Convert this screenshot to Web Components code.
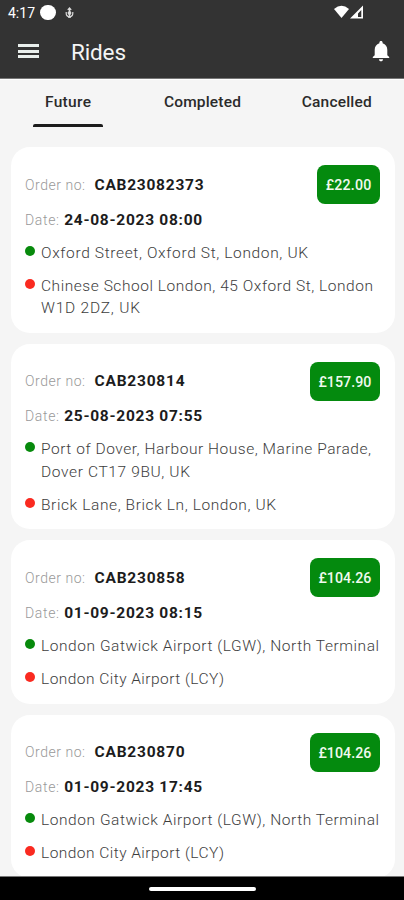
<!DOCTYPE html>
<html lang="en">
<head>
<meta charset="utf-8">
<title>Rides</title>
<style>
html, body { margin: 0; height: 100%; overflow: hidden; }
body { font-family: Roboto, "Noto Sans", sans-serif; background: #f5f5f5; }
</style>
</head>
<body>
<rides-app></rides-app>
<script>
class Base extends HTMLElement {
  constructor() { super(); this.attachShadow({ mode: 'open' }); }
  connectedCallback() { this.shadowRoot.innerHTML = this.render(); }
  render() { return ''; }
}

/* One line of text whose tracking is adjusted to fill a given width. */
customElements.define('tracked-text', class extends Base {
  connectedCallback() {
    super.connectedCallback();
    const s = this.shadowRoot.querySelector('span');
    const n = this.textContent.length;
    const w = s.getBoundingClientRect().width;
    s.style.letterSpacing = ((Number(this.getAttribute('w')) - w) / (n - 1)).toFixed(3) + 'px';
  }
  render() {
    return `<style>:host{display:block;white-space:nowrap} span{display:inline-block}</style><span><slot></slot></span>`;
  }
});

customElements.define('status-bar', class extends Base {
  render() {
    return `<style>
      :host{display:flex;align-items:center;height:25px;padding:0 39px 0 8px;color:#fff;font-size:14px;line-height:25px}
      .l{display:flex;align-items:center;flex:1}
      .l tracked-text{padding-top:2px}
      .dot{width:15.5px;height:15.5px;border-radius:50%;background:#fff;margin-left:5px}
      svg{display:block}
    </style>
    <div class="l"><tracked-text w="27">4:17</tracked-text><div class="dot"></div>
      <svg style="margin-left:8.5px" width="11" height="14" viewBox="0 0 11 14" fill="none" stroke="#ddd" stroke-width="1.2">
        <path d="M5.5 2.5v9M2.2 6v1.2a3.3 3.3 0 0 0 6.6 0V6M3.8 4l1.7-2 1.7 2"/><circle cx="5.5" cy="7" r="1.3" fill="#ddd"/><path d="M4 11.2h3"/>
      </svg></div>
    <svg width="31" height="15" viewBox="0 0 31 15" fill="#fff">
      <path d="M0 4Q7.5-2.4 15 4L7.5 13Z"/>
      <path fill-rule="evenodd" d="M29 .5V13.5H16ZM27.3 5L24 8.5V12H27.3Z"/>
    </svg>`;
  }
});

customElements.define('app-bar', class extends Base {
  render() {
    return `<style>
      :host{display:flex;align-items:center;height:53px;padding:0 14px 0 18px;color:#f5f5f5}
      .menu{width:21px;display:grid;gap:2.5px;margin:-1px 32px 0 0}
      .menu i{height:3px;background:#e9efec}
      .t{font-size:22.5px;flex:1;line-height:30px}
      svg{display:block}
    </style>
    <div class="menu"><i></i><i></i><i></i></div>
    <div class="t"><tracked-text w="55">${this.textContent}</tracked-text></div>
    <svg width="18" height="21" viewBox="0 0 18 21" fill="#fff">
      <path d="M9 0C8 0 7.4.7 7.4 1.6V2.2C4.4 3 2.7 5.6 2.7 8.8V14.2L.8 16.1V17.1H17.2V16.1L15.3 14.2V8.8C15.3 5.6 13.6 3 10.6 2.2V1.6C10.6.7 10 0 9 0ZM7 18.2C7 19.5 7.9 20.3 9 20.3S11 19.5 11 18.2Z"/>
    </svg>`;
  }
});

customElements.define('tab-item', class extends Base {
  render() {
    return `<style>
      :host{display:flex;flex-direction:column;align-items:center;justify-content:space-between;flex:1;box-sizing:border-box;padding-top:12px;font-size:15.5px;line-height:20px;font-weight:500;color:#2b2b2b}
      i{width:70px;height:3px;border-radius:2px 2px 0 0}
      :host([active]) i{background:#1c1c1c}
    </style><tracked-text w="${this.getAttribute('w')}">${this.textContent}</tracked-text><i></i>`;
  }
});

customElements.define('tab-row', class extends Base {
  render() { return `<style>:host{display:flex;height:47px;padding-left:1px;border-top:1px solid #fff;margin-bottom:20.2px}</style><slot></slot>`; }
});

customElements.define('price-badge', class extends Base {
  render() {
    return `<style>
      :host{display:flex;align-items:center;height:39px;box-sizing:border-box;padding:1px 8.5px 0;background:#048a0e;border-radius:8px;color:#f1faef;font-size:14.2px;font-weight:500}
    </style><tracked-text w="${this.getAttribute('w')}">${this.textContent}</tracked-text>`;
  }
});

customElements.define('route-stop', class extends Base {
  render() {
    return `<style>
      :host{display:flex;font-size:15.5px;line-height:22.4px;font-weight:300;color:#3d3d3d}
      i{width:10px;height:10px;border-radius:50%;background:#078a0c;margin:4px 6px 0 0;flex:none}
      :host([kind=drop]) i{background:#fa2a20}
    </style><i></i><div><slot></slot></div>`;
  }
});

customElements.define('ride-card', class extends Base {
  render() {
    const a = n => this.getAttribute(n);
    return `<style>
      :host{display:block;background:#fff;border-radius:19px;padding:18px 14.5px 13.2px 14px;flex:none}
      .top{display:flex;align-items:center;height:39px}
      .k{font-size:14px;font-weight:300;color:#999}
      .v{font-size:15.5px;font-weight:700;color:#1c1c1c}
      .top .v{margin-left:9px;flex:1}
      .date{display:flex;align-items:center;height:22px;margin:4.5px 0 11.2px}
      .date .v{margin-left:4.5px}
      .stops{display:grid;gap:10.5px}
    </style>
    <div class="top"><tracked-text class="k" w="60">Order no:</tracked-text><tracked-text class="v" w="${a('order-w')}">${a('order')}</tracked-text><price-badge w="${a('price-w')}">${a('price')}</price-badge></div>
    <div class="date"><tracked-text class="k" w="34">Date:</tracked-text><tracked-text class="v" w="138">${a('date')}</tracked-text></div>
    <div class="stops"><slot></slot></div>`;
  }
});

customElements.define('home-bar', class extends Base {
  render() {
    return `<style>:host{display:flex;justify-content:center;align-items:center;height:24px;background:#000;border-top:1px solid #777;box-sizing:border-box}
    i{width:107px;height:4px;border-radius:2px;background:#fff}</style><i></i>`;
  }
});

customElements.define('rides-app', class extends Base {
  render() {
    return `<style>
      :host{display:flex;flex-direction:column;width:404px;height:900px;overflow:hidden;background:#f5f5f5}
      header{background:#333;border-bottom:1px solid #777}
      .list{flex:1;min-height:0;overflow:hidden;display:flex;flex-direction:column;gap:11px;padding:0 9.5px 0 11px}
    </style>
    <header><status-bar></status-bar><app-bar>Rides</app-bar></header>
    <tab-row><tab-item active w="46">Future</tab-item><tab-item w="77">Completed</tab-item><tab-item w="70">Cancelled</tab-item></tab-row>
    <div class="list">
      <ride-card order="CAB23082373" order-w="109" price="£22.00" price-w="45.5" date="24-08-2023 08:00">
        <route-stop><tracked-text w="267">Oxford Street, Oxford St, London, UK</tracked-text></route-stop>
        <route-stop kind="drop"><tracked-text w="332">Chinese School London, 45 Oxford St, London</tracked-text><tracked-text w="99">W1D 2DZ, UK</tracked-text></route-stop>
      </ride-card>
      <ride-card order="CAB230814" order-w="90" price="£157.90" price-w="53" date="25-08-2023 07:55">
        <route-stop><tracked-text w="330">Port of Dover, Harbour House, Marine Parade,</tracked-text><tracked-text w="149">Dover CT17 9BU, UK</tracked-text></route-stop>
        <route-stop kind="drop"><tracked-text w="235">Brick Lane, Brick Ln, London, UK</tracked-text></route-stop>
      </ride-card>
      <ride-card order="CAB230858" order-w="90" price="£104.26" price-w="53" date="01-09-2023 08:15">
        <route-stop><tracked-text w="338">London Gatwick Airport (LGW), North Terminal</tracked-text></route-stop>
        <route-stop kind="drop"><tracked-text w="183">London City Airport (LCY)</tracked-text></route-stop>
      </ride-card>
      <ride-card order="CAB230870" order-w="90" price="£104.26" price-w="53" date="01-09-2023 17:45">
        <route-stop><tracked-text w="338">London Gatwick Airport (LGW), North Terminal</tracked-text></route-stop>
        <route-stop kind="drop"><tracked-text w="183">London City Airport (LCY)</tracked-text></route-stop>
      </ride-card>
    </div>
    <home-bar></home-bar>`;
  }
});
</script>
</body>
</html>
